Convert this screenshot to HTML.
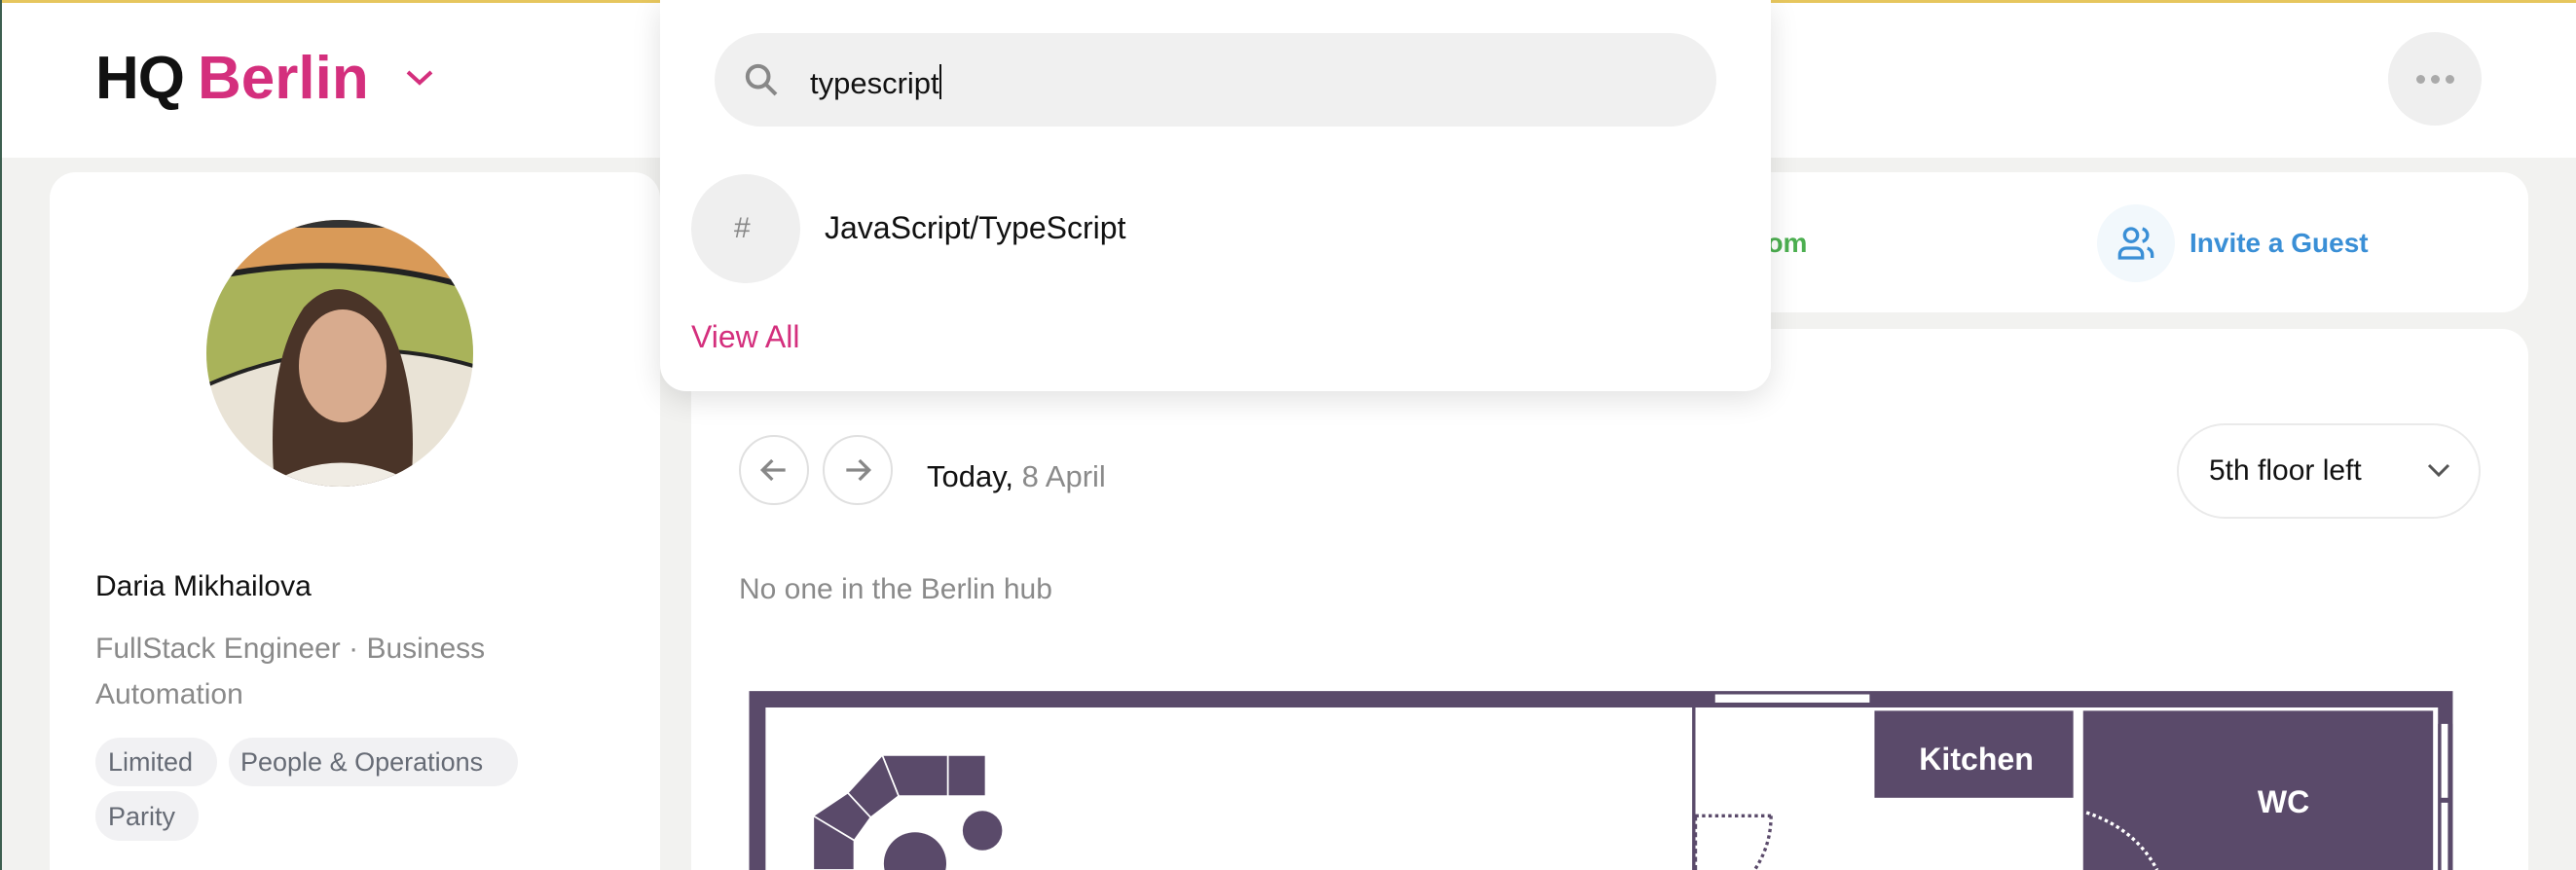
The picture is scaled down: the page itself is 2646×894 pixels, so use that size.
<!DOCTYPE html>
<html style="width:2646px;height:894px;overflow:hidden"><head><meta charset="utf-8"><style>
*{margin:0;padding:0;box-sizing:border-box}
body{width:2646px;height:894px;overflow:hidden;background:#f2f2f0;font-family:"Liberation Sans",sans-serif;position:relative}
.a{position:absolute}
.t{position:absolute;white-space:nowrap;line-height:1}
</style></head><body>
<div class="a" style="left:0;top:0;width:2646px;height:162px;background:#fff"></div>
<div class="a" style="left:0;top:0;width:2646px;height:3px;background:#e6c65e"></div>
<div class="a" style="left:0;top:0;width:2px;height:894px;background:#3d5f50"></div>
<div class="t" style="left:98px;top:50px;font-size:62px;font-weight:bold;letter-spacing:-1px;color:#111">HQ<span style="color:#d42f7d;margin-left:14px;letter-spacing:0">Berlin</span></div>
<svg class="a" style="left:416px;top:70px" width="30" height="20" viewBox="0 0 30 20"><path d="M3 4 L15 15 L27 4" fill="none" stroke="#d42f7d" stroke-width="4"/></svg>
<div class="a" style="left:2453px;top:33px;width:96px;height:96px;border-radius:50%;background:#efefef"></div>
<div class="a" style="left:2482px;top:77px;width:9px;height:9px;border-radius:50%;background:#aaa;box-shadow:15px 0 #aaa,30px 0 #aaa"></div>

<div class="a" style="left:51px;top:177px;width:627px;height:717px;background:#fff;border-radius:27px 27px 0 0"></div>
<svg class="a" style="left:212px;top:226px" width="274" height="274" viewBox="0 0 274 274">
<defs><clipPath id="c"><circle cx="137" cy="137" r="137"/></clipPath></defs>
<g clip-path="url(#c)">
<rect width="274" height="274" fill="#e9e3d6"/>
<rect width="274" height="60" fill="#d99a58"/>
<rect y="0" width="274" height="8" fill="#333"/>
<path d="M0 60 Q137 30 274 70 L274 150 Q137 110 0 170Z" fill="#a9b35a"/>
<path d="M0 60 Q137 30 274 70" stroke="#222" stroke-width="6" fill="none"/>
<path d="M0 170 Q137 110 274 150" stroke="#222" stroke-width="4" fill="none"/>
<path d="M70 274 Q60 150 100 90 Q137 50 180 95 Q220 160 210 274Z" fill="#4a3428"/>
<ellipse cx="140" cy="150" rx="45" ry="58" fill="#d8ab8e"/>
<path d="M60 274 Q137 225 220 274Z" fill="#f0ece4"/>
</g></svg>
<div class="t" style="left:98px;top:588px;font-size:30px;color:#111">Daria Mikhailova</div>
<div class="t" style="left:98px;top:643px;font-size:30px;color:#8a8a8a;line-height:47px;white-space:normal;width:500px">FullStack Engineer · Business Automation</div>
<div class="a" style="left:98px;top:758px;width:125px;height:50px;border-radius:25px;background:#f1f1f3"></div>
<div class="t" style="left:111px;top:770px;font-size:27px;color:#666b75">Limited</div>
<div class="a" style="left:235px;top:758px;width:297px;height:50px;border-radius:25px;background:#f1f1f3"></div>
<div class="t" style="left:247px;top:770px;font-size:27px;color:#666b75">People &amp; Operations</div>
<div class="a" style="left:98px;top:813px;width:106px;height:51px;border-radius:25px;background:#f1f1f3"></div>
<div class="t" style="left:111px;top:826px;font-size:27px;color:#666b75">Parity</div>

<div class="a" style="left:710px;top:177px;width:1887px;height:144px;background:#fff;border-radius:27px"></div>
<div class="t" style="left:1676px;top:236px;font-size:28px;font-weight:bold;color:#4caf50">Book a Room</div>
<div class="a" style="left:2154px;top:210px;width:80px;height:80px;border-radius:50%;background:#f2f8fc"></div>
<svg class="a" style="left:2174px;top:230px" width="40" height="40" viewBox="0 0 24 24" fill="none" stroke="#3a8fd6" stroke-width="2"><circle cx="9" cy="7" r="4"/><path d="M2 21v-2a4 4 0 0 1 4-4h6a4 4 0 0 1 4 4v2z"/><path d="M16 3.1a4 4 0 0 1 0 7.8M22 21v-2a4 4 0 0 0-3-3.9"/></svg>
<div class="t" style="left:2249px;top:236px;font-size:28px;font-weight:bold;color:#3a8fd6">Invite a Guest</div>

<div class="a" style="left:710px;top:338px;width:1887px;height:556px;background:#fff;border-radius:27px 27px 0 0"></div>
<div class="a" style="left:759px;top:447px;width:72px;height:72px;border-radius:50%;border:2px solid #e0e0e0"></div>
<div class="a" style="left:845px;top:447px;width:72px;height:72px;border-radius:50%;border:2px solid #e0e0e0"></div>
<svg class="a" style="left:775px;top:463px" width="40" height="40" viewBox="0 0 24 24" fill="none" stroke="#888" stroke-width="2"><path d="M19 12H5M11 6l-6 6 6 6"/></svg>
<svg class="a" style="left:861px;top:463px" width="40" height="40" viewBox="0 0 24 24" fill="none" stroke="#888" stroke-width="2"><path d="M5 12h14M13 6l6 6-6 6"/></svg>
<div class="t" style="left:952px;top:474px;font-size:31px;color:#111">Today, <span style="color:#8a8a8a">8 April</span></div>
<div class="a" style="left:2236px;top:435px;width:312px;height:98px;border-radius:49px;border:2px solid #eaeaea"></div>
<div class="t" style="left:2269px;top:469px;font-size:30px;color:#111">5th floor left</div>
<svg class="a" style="left:2492px;top:474px" width="26" height="18" viewBox="0 0 26 18"><path d="M3 4l10 10 10-10" fill="none" stroke="#555" stroke-width="3"/></svg>
<div class="t" style="left:759px;top:591px;font-size:30px;color:#8a8a8a">No one in the Berlin hub</div>

<svg class="a" style="left:0;top:0" width="2646" height="894" viewBox="0 0 1568 530" preserveAspectRatio="none">
<rect x="456" y="421" width="1037" height="120" fill="#5a4a6a"/>
<rect x="466" y="431" width="1018" height="110" fill="#fff"/>
<rect x="1044" y="423" width="94" height="5" fill="#fff"/>
<rect x="1030" y="431" width="2" height="100" fill="#5a4a6a"/>
<rect x="1141" y="433" width="121" height="53" fill="#5a4a6a"/>
<rect x="1268" y="433" width="213" height="100" fill="#5a4a6a"/>
<rect x="1484" y="441" width="9" height="100" fill="#5a4a6a"/>
<rect x="1486" y="441" width="4" height="45" fill="#fff"/>
<rect x="1486" y="489" width="4" height="45" fill="#fff"/>
<text x="1203" y="469" font-family="Liberation Sans" font-weight="bold" font-size="19" fill="#fff" text-anchor="middle">Kitchen</text>
<text x="1390" y="495" font-family="Liberation Sans" font-weight="bold" font-size="19" fill="#fff" text-anchor="middle">WC</text>
<path d="M1032 497H1078M1078 497Q1078 515 1068 530" fill="none" stroke="#5a4a6a" stroke-width="2" stroke-dasharray="2 2"/>
<path d="M1032 497V530" stroke="#5a4a6a" stroke-width="2" stroke-dasharray="3 2"/>
<path d="M1270 495Q1300 505 1313 530" fill="none" stroke="#fff" stroke-width="2" stroke-dasharray="2 2"/>
<g fill="#5a4a6a" stroke="#fff" stroke-width="1">
<path d="M537 460H577V485H547Z"/><path d="M577 460H600V485H577Z"/>
<path d="M537 460L547 485L530 498L516 483Z"/>
<path d="M516 483L530 498L520 512L495 497Z"/>
<path d="M495 497L520 512V530H495Z"/>
</g>
<circle cx="598" cy="506" r="12" fill="#5a4a6a"/>
<circle cx="557" cy="526" r="19" fill="#5a4a6a"/>
</svg>

<div class="a" style="left:678px;top:0;width:1141px;height:402px;background:#fff;border-radius:0 0 27px 27px;box-shadow:0 8px 30px rgba(0,0,0,.12)"></div>
<div class="a" style="left:734px;top:34px;width:1029px;height:96px;border-radius:48px;background:#f0f0f0"></div>
<svg class="a" style="left:762px;top:62px" width="40" height="40" viewBox="0 0 24 24" fill="none" stroke="#888" stroke-width="2.4"><circle cx="10" cy="10" r="6.5"/><path d="M15 15l6 6"/></svg>
<div class="t" style="left:832px;top:66px;font-size:31px;color:#111">typescript<span style="display:inline-block;width:2px;height:36px;background:#111;vertical-align:-6px"></span></div>
<div class="a" style="left:710px;top:179px;width:112px;height:112px;border-radius:50%;background:#efefef"></div>
<div class="t" style="left:754px;top:220px;font-size:30px;color:#888">#</div>
<div class="t" style="left:847px;top:218px;font-size:32px;color:#111">JavaScript/TypeScript</div>
<div class="t" style="left:710px;top:330px;font-size:32px;color:#d42f7d">View All</div>
</body></html>
